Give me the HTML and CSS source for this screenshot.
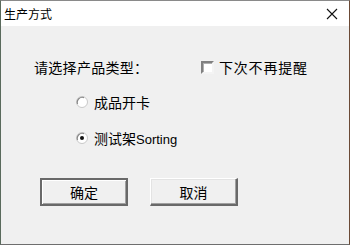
FILE: index.html
```html
<!DOCTYPE html>
<html>
<head>
<meta charset="utf-8">
<link rel="stylesheet" href="styles.css">
</head>
<body>
<div class="window">
  <div class="titlebar">
    <span class="title">生产方式</span>
    <svg class="close" width="12" height="12" viewBox="0 0 12 12"><path d="M1 1 L11 11 M11 1 L1 11" stroke="#111" stroke-width="1.1" fill="none"/></svg>
  </div>
  <div class="content">
    <div class="row-top">
      <span class="label">请选择产品类型：</span>
      <label class="check"><span class="box"></span><span class="check-text">下次不再提醒</span></label>
    </div>
    <div class="radio-row first">
      <svg class="radio" width="12" height="12" viewBox="0 0 12 12">
        <circle cx="6" cy="6" r="5.5" fill="#fff" stroke="#c8c8c8"/>
        <path d="M1.6 8 A5 5 0 0 1 8 1.6" stroke="#8a8a8a" stroke-width="1.2" fill="none"/>
      </svg>
      <span>成品开卡</span>
    </div>
    <div class="radio-row second">
      <svg class="radio" width="12" height="12" viewBox="0 0 12 12">
        <circle cx="6" cy="6" r="5.5" fill="#fff" stroke="#c8c8c8"/>
        <path d="M1.6 8 A5 5 0 0 1 8 1.6" stroke="#8a8a8a" stroke-width="1.2" fill="none"/>
        <circle cx="6" cy="6" r="2" fill="#111"/>
      </svg>
      <span>测试架<span class="latin">Sorting</span></span>
    </div>
    <div class="buttons">
      <button class="btn default">确定</button>
      <button class="btn">取消</button>
    </div>
  </div>
</div>
</body>
</html>
```
FILE: styles.css
```css
html, body {
  margin: 0;
  padding: 0;
  background: #f0f0f0;
}
.window {
  width: 350px;
  height: 245px;
  box-sizing: border-box;
  border: 1px solid #6e6e6e;
  border-left-color: #5a6a5c;
  border-right-color: #6b4a36;
  border-top-color: #8a8a8a;
  background: #f0f0f0;
  display: flex;
  flex-direction: column;
  font-family: "Noto Sans CJK SC", "Liberation Sans", sans-serif;
  color: #000;
}
.titlebar {
  height: 25px;
  background: #fff;
  display: flex;
  align-items: center;
  justify-content: space-between;
  padding: 0 11px 0 3px;
}
.title {
  font-size: 12px;
  line-height: 14px;
}
.close {
  display: block;
}
.content {
  flex: 1;
  display: flex;
  flex-direction: column;
}
.row-top {
  display: flex;
  align-items: center;
  height: 20px;
  margin-top: 31px;
  padding-left: 33px;
  font-size: 14px;
}
.label {
  width: 167px;
  letter-spacing: 0.3px;
}
.check {
  display: flex;
  align-items: center;
  gap: 5px;
}
.check-text {
  letter-spacing: 0.8px;
}
.box {
  width: 9px;
  height: 9px;
  background: #fff;
  border-style: solid;
  border-width: 2px;
  border-color: #808080 #f4f4f4 #f4f4f4 #808080;
  box-shadow: inset 1px 1px 0 #b0b0b0;
}
.radio-row {
  display: flex;
  align-items: center;
  height: 20px;
  padding-left: 75px;
  gap: 6px;
  font-size: 14px;
}
.radio-row.first {
  margin-top: 15px;
}
.radio-row.second {
  margin-top: 16px;
}
.radio {
  display: block;
}
.latin {
  font-family: "Liberation Sans", sans-serif;
  font-size: 13px;
}
.buttons {
  display: flex;
  gap: 22px;
  margin-top: 30px;
  padding-left: 39px;
}
.btn {
  width: 88px;
  height: 28px;
  box-sizing: border-box;
  margin: 0;
  padding: 0;
  font-family: "Noto Sans CJK SC", sans-serif;
  font-size: 14px;
  color: #000;
  background: #f0f0f0;
  border-style: solid;
  border-width: 1px 2px 2px 1px;
  border-color: #ffffff #696969 #696969 #ffffff;
  box-shadow: inset -1px -1px 0 #a0a0a0, inset 1px 1px 0 #e3e3e3;
}
.btn.default {
  border-width: 2px;
  border-color: #696969;
  box-shadow: inset 1px 1px 0 #ffffff, inset -1px -1px 0 #a0a0a0;
}
```
